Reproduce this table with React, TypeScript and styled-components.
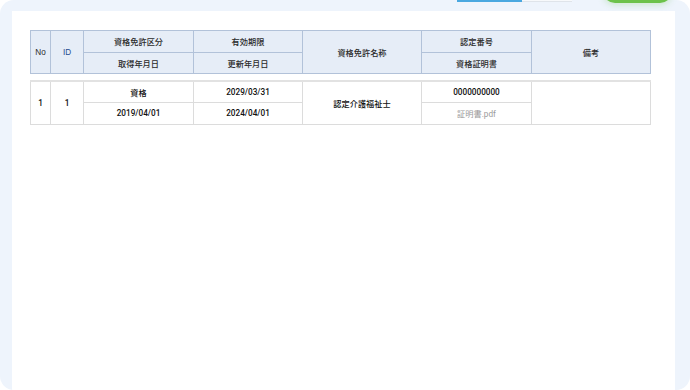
import * as React from 'react'
import styled, { createGlobalStyle } from 'styled-components'

const GlobalStyle = createGlobalStyle`
  html, body {
    margin: 0;
    background: #fff;
    font-family: 'Liberation Sans', 'Noto Sans CJK JP', sans-serif;
  }
`

const columns = [20, 33, 110, 109, 119, 110, 119]

export default function App() {
  return (
    <Panel>
      <GlobalStyle />
      <Toolbar>
        <Tabs>
          <Tab active />
          <Tab />
        </Tabs>
        <SaveButton />
      </Toolbar>
      <Content>
        <Table>
          <Cols />
          <thead>
            <HeadRow>
              <HeadCell rowSpan={2}>No</HeadCell>
              <HeadCell rowSpan={2} link>
                ID
              </HeadCell>
              <HeadCell>資格免許区分</HeadCell>
              <HeadCell>有効期限</HeadCell>
              <HeadCell rowSpan={2}>資格免許名称</HeadCell>
              <HeadCell>認定番号</HeadCell>
              <HeadCell rowSpan={2}>備考</HeadCell>
            </HeadRow>
            <HeadRow>
              <HeadCell>取得年月日</HeadCell>
              <HeadCell>更新年月日</HeadCell>
              <HeadCell>資格証明書</HeadCell>
            </HeadRow>
          </thead>
        </Table>
        <BodyTable>
          <Cols />
          <tbody>
            <BodyRow>
              <Cell rowSpan={2}>1</Cell>
              <Cell rowSpan={2}>1</Cell>
              <Cell>資格</Cell>
              <Cell>2029/03/31</Cell>
              <Cell rowSpan={2}>認定介護福祉士</Cell>
              <Cell>0000000000</Cell>
              <Cell rowSpan={2}></Cell>
            </BodyRow>
            <BodyRow>
              <Cell>2019/04/01</Cell>
              <Cell>2024/04/01</Cell>
              <Cell muted>証明書.pdf</Cell>
            </BodyRow>
          </tbody>
        </BodyTable>
      </Content>
    </Panel>
  )
}

function Cols() {
  return (
    <colgroup>
      {columns.map((w, i) => (
        <col key={i} style={{ width: w }} />
      ))}
    </colgroup>
  )
}

const Panel = styled.div`
  height: 390px;
  box-sizing: border-box;
  background: #eef4fc;
  border-radius: 14px;
  padding: 0 15px 0 12px;
  display: flex;
  flex-direction: column;
  overflow: hidden;
`

const Toolbar = styled.div`
  height: 11px;
  display: flex;
  justify-content: flex-end;
  align-items: flex-start;
  padding-right: 3px;
  gap: 31px;
`

const Tabs = styled.div`
  display: flex;
  margin-top: -28px;
`

const Tab = styled.div<{ active?: boolean }>`
  width: ${p => (p.active ? 65 : 50)}px;
  height: 30px;
  box-sizing: border-box;
  background: ${p => (p.active ? '#fff' : '#f7f9fb')};
  border-bottom: ${p => (p.active ? '2px solid #4aa8e0' : '1px solid #dfe4ea')};
`

const SaveButton = styled.div`
  width: 69px;
  height: 31px;
  margin-top: -28px;
  border-radius: 0 0 12px 12px;
  background: #6cc24a;
  box-shadow: 0 2px 6px rgba(108, 194, 74, 0.25);
`

const Content = styled.div`
  flex: 1;
  background: #fff;
  padding: 19px 25px 0 18px;
`

const Table = styled.table`
  width: 620px;
  table-layout: fixed;
  border-collapse: collapse;
  font-size: 8.2px;
  color: #333;
`

const BodyTable = styled(Table)`
  margin-top: 6px;
  border-top: 2px solid #e2e2e2;
  font-family: Roboto, 'Noto Sans CJK JP', sans-serif;
`

const HeadRow = styled.tr`
  height: 21.5px;
`

const BodyRow = styled.tr`
  height: 21.5px;
`

const HeadCell = styled.th<{ link?: boolean }>`
  padding: 0;
  background: #e6edf7;
  border: 1px solid #b2c2d9;
  font-weight: 500;
  color: ${p => (p.link ? '#1f4c8f' : '#2a2a2a')};
  text-align: center;
  vertical-align: middle;
`

const Cell = styled.td<{ muted?: boolean }>`
  padding: 0;
  border: 1px solid #dcdcdc;
  text-align: center;
  vertical-align: middle;
  font-weight: ${p => (p.muted ? 400 : 500)};
  color: ${p => (p.muted ? '#9a9a9a' : '#111')};
`
